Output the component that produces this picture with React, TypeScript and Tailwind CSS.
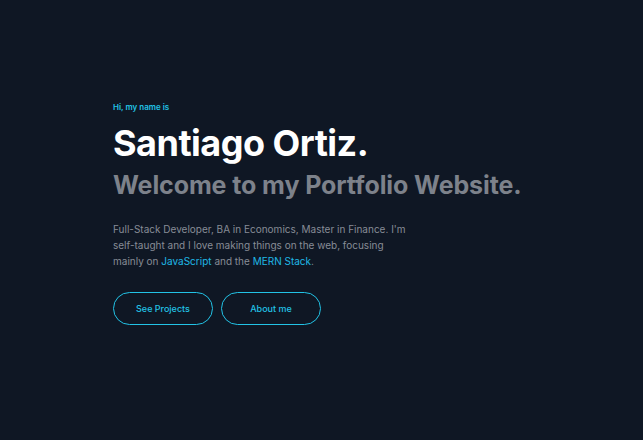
const Hero = () => {
  return (
    <section
      id="home"
      className="bg-[#0f1724] min-h-screen w-full font-['Inter',sans-serif] pl-[113px] pt-[101px]"
    >
      <p className="text-[8px] leading-[12px] font-semibold text-[#22c3e6]">
        Hi, my name is
      </p>
      <h1 className="mt-[8px] text-[36px] leading-[44px] font-bold text-white tracking-[-0.5px]">
        Santiago Ortiz.
      </h1>
      <h2 className="mt-[5px] text-[25px] leading-[30px] font-bold text-[#7d828b] tracking-[-0.1px]">
        Welcome to my Portfolio Website.
      </h2>
      <p className="mt-[21px] w-[300px] text-[10px] leading-[16px] text-[#878c96]">
        Full-Stack Developer, BA in Economics, Master in Finance. I'm
        self-taught and I love making things on the web, focusing mainly on{" "}
        <span className="text-[#1fb8e6]">JavaScript</span> and the{" "}
        <span className="text-[#1fb8e6]">MERN Stack</span>.
      </p>
      <div className="mt-[23px] flex gap-[8px]">
        <button className="w-[100px] h-[33px] rounded-full border border-[#22c3e6] text-[9px] font-medium text-[#22c3e6]">
          See Projects
        </button>
        <button className="w-[100px] h-[33px] rounded-full border border-[#22c3e6] text-[9px] font-medium text-[#22c3e6]">
          About me
        </button>
      </div>
    </section>
  );
};

export default function App() {
  return <Hero />;
}
